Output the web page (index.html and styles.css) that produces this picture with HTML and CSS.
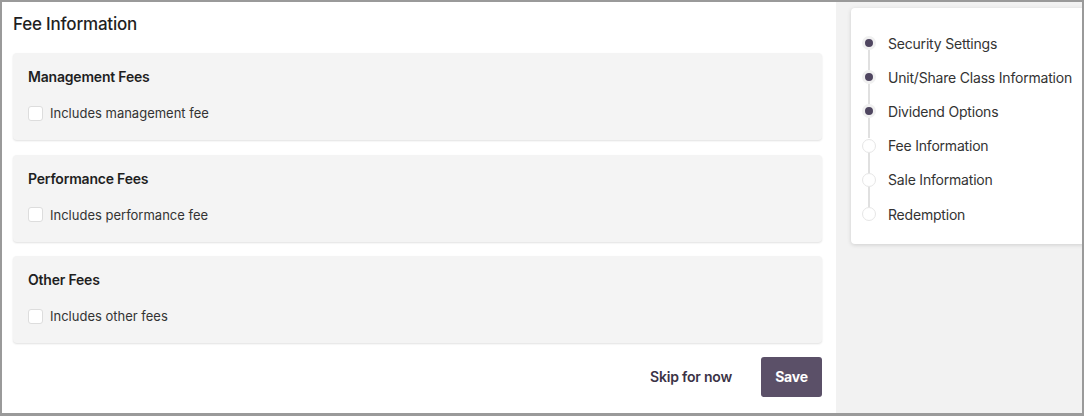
FILE: index.html
```html
<!DOCTYPE html>
<html lang="en">
<head>
    <meta charset="UTF-8">
    <title>Fee Information</title>
    <link rel="stylesheet" href="styles.css">
</head>
<body>
    <div class="frame">
        <section class="main">
            <h2 class="page-title">Fee Information</h2>

            <div class="fee-card">
                <h3>Management Fees</h3>
                <label class="check"><span class="box"></span>Includes management fee</label>
            </div>

            <div class="fee-card">
                <h3>Performance Fees</h3>
                <label class="check"><span class="box"></span>Includes performance fee</label>
            </div>

            <div class="fee-card">
                <h3>Other Fees</h3>
                <label class="check"><span class="box"></span>Includes other fees</label>
            </div>

            <div class="actions">
                <button class="skip-button">Skip for now</button>
                <button class="save-button">Save</button>
            </div>
        </section>

        <aside class="side">
            <ul class="stepper">
                <li class="done"><span class="dot"></span>Security Settings</li>
                <li class="done"><span class="dot"></span>Unit/Share Class Information</li>
                <li class="done"><span class="dot"></span>Dividend Options</li>
                <li><span class="dot"></span>Fee Information</li>
                <li><span class="dot"></span>Sale Information</li>
                <li class="last"><span class="dot"></span>Redemption</li>
            </ul>
        </aside>
    </div>
</body>
</html>
```

FILE: styles.css
```css
* {
    margin: 0;
    padding: 0;
    box-sizing: border-box;
    font-family: 'Inter', 'Roboto', sans-serif;
    letter-spacing: -0.2px;
}

body {
    background-color: #9a9a9a;
    color: #222;
    width: 1084px;
    height: 416px;
    overflow: hidden;
}

.frame {
    margin: 2px 2px 3px 2px;
    height: 411px;
    background-color: #f2f2f2;
    display: flex;
    overflow: hidden;
}

.main {
    width: 834px;
    flex-shrink: 0;
    background-color: #fff;
    padding: 11px 14px 0 11px;
    display: flex;
    flex-direction: column;
}

.page-title {
    font-size: 17px;
    font-weight: 500;
    color: #1f1f1f;
    line-height: 22px;
    margin-bottom: 18px;
}

.fee-card {
    background-color: #f4f4f4;
    border-radius: 4px;
    box-shadow: 0 1px 2px rgba(0, 0, 0, 0.12);
    height: 87px;
    padding: 15px 15px 0 15px;
    margin-bottom: 14.5px;
}

.fee-card h3 {
    font-size: 14px;
    font-weight: 600;
    color: #1f1f1f;
    line-height: 18px;
    margin-bottom: 19px;
}

.check {
    display: flex;
    align-items: center;
    gap: 7px;
    font-size: 13px;
    letter-spacing: 0;
    color: #333;
}

.check .box {
    width: 15px;
    height: 15px;
    background-color: #fff;
    border: 1px solid #ddd;
    border-radius: 3px;
}

.actions {
    display: flex;
    justify-content: flex-end;
    align-items: center;
    gap: 29px;
    margin-top: -1px;
}

.skip-button {
    background: none;
    border: none;
    font-size: 14px;
    font-weight: 600;
    color: #3b3346;
    cursor: pointer;
}

.save-button {
    background-color: #5b5068;
    color: #fff;
    border: none;
    border-radius: 3px;
    width: 61px;
    height: 40px;
    font-size: 14px;
    font-weight: 700;
    cursor: pointer;
}

.side {
    flex: 1;
    padding: 6px 0 0 15px;
}

.stepper {
    list-style: none;
    background-color: #fff;
    border-radius: 4px 0 0 4px;
    box-shadow: 0 1px 4px rgba(0, 0, 0, 0.15);
    width: 250px;
    height: 236px;
    padding: 18px 0 0 11px;
}

.stepper li {
    position: relative;
    display: flex;
    align-items: center;
    gap: 12px;
    height: 34.2px;
    font-size: 14px;
    color: #333;
}

.stepper li::after {
    content: "";
    position: absolute;
    left: 6px;
    top: 24px;
    width: 2px;
    height: 20px;
    background-color: #e0e0e0;
}

.stepper li.last::after {
    display: none;
}

.dot {
    width: 14px;
    height: 14px;
    border-radius: 50%;
    border: 1px solid #e6e6e6;
    background-color: #fff;
    flex-shrink: 0;
}

.done .dot {
    border: 3px solid #f0f0f0;
    background-color: #4f4660;
}
```
